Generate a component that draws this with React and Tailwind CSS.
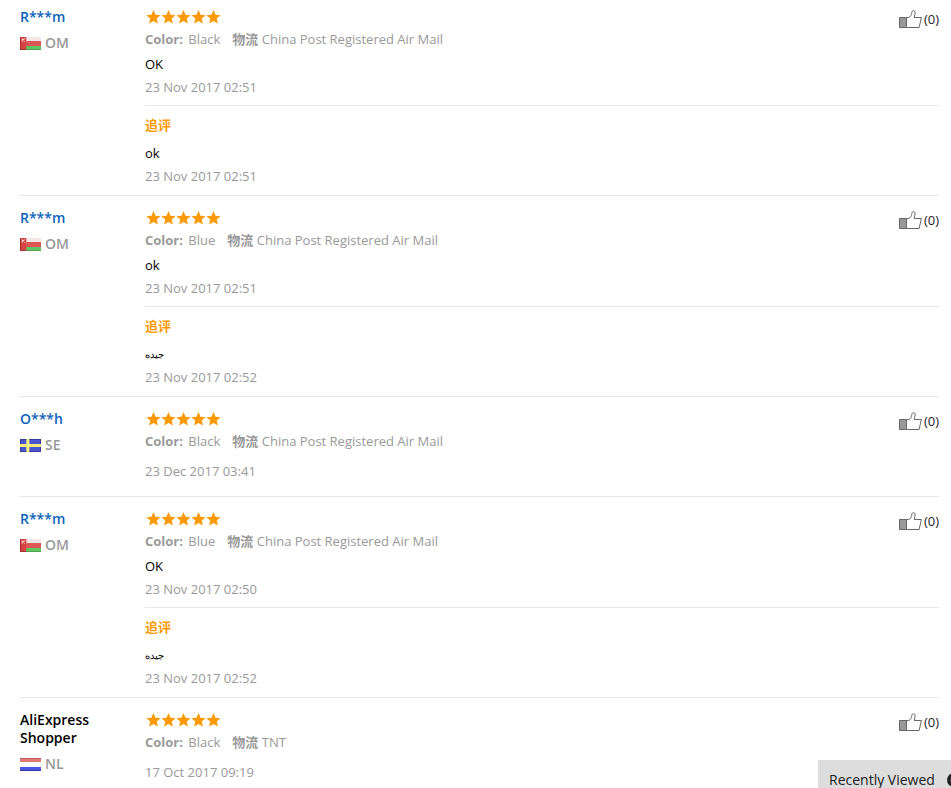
import React from "react";

const reviews = [
  { user: "R***m", country: "OM", color: "Black", shipping: "China Post Registered Air Mail", text: "OK", date: "23 Nov 2017 02:51", extra: { text: "ok", date: "23 Nov 2017 02:51" } },
  { user: "R***m", country: "OM", color: "Blue", shipping: "China Post Registered Air Mail", text: "ok", date: "23 Nov 2017 02:51", extra: { text: "جيده", arabic: true, date: "23 Nov 2017 02:52" } },
  { user: "O***h", country: "SE", color: "Black", shipping: "China Post Registered Air Mail", date: "23 Dec 2017 03:41" },
  { user: "R***m", country: "OM", color: "Blue", shipping: "China Post Registered Air Mail", text: "OK", date: "23 Nov 2017 02:50", extra: { text: "جيده", arabic: true, date: "23 Nov 2017 02:52" } },
  { user: "AliExpress Shopper", anonymous: true, country: "NL", color: "Black", shipping: "TNT", date: "17 Oct 2017 09:19" },
];

function Flag({ country }) {
  return (
    <svg width="21" height="13" viewBox="0 0 20 13" preserveAspectRatio="none" className="shrink-0" aria-hidden="true">
      {country === "OM" && (
        <g>
          <rect width="20" height="13" fill="#d64545" />
          <rect x="6" width="14" height="5" fill="#f3e6e6" />
          <rect x="6" y="4" width="14" height="5" fill="#dc5656" />
          <rect x="6" y="9" width="14" height="4" fill="#62c462" />
          <path d="M1.5 1.5l3 3m0-3l-3 3" stroke="#f8dede" strokeWidth="1" />
          <path d="M.5 0v13M0 12.5h6" stroke="#a92f2f" />
          <path d="M6 12.5h14" stroke="#4da64d" />
        </g>
      )}
      {country === "SE" && (
        <g>
          <rect width="20" height="13" fill="#4a55cf" />
          <path d="M0 6.5h20M7.5 0v13" stroke="#f1ec82" strokeWidth="3" />
          <path d="M0 .5h6M9 .5h11M0 12.5h6M9 12.5h11M.5 0v5M.5 8v5M19.5 0v5M19.5 8v5" stroke="#343b9c" />
        </g>
      )}
      {country === "NL" && (
        <g>
          <rect width="20" height="13" fill="#fbfbfb" />
          <rect width="20" height="4" fill="#e27878" />
          <rect y="9" width="20" height="4" fill="#4a55e0" />
          <path d="M0 .5h20" stroke="#bf5c5c" />
          <path d="M0 12.5h20" stroke="#3036a8" />
        </g>
      )}
    </svg>
  );
}

function Stars() {
  return (
    <div className="flex h-5 items-center" role="img" aria-label="5 stars">
      {[1, 2, 3, 4, 5].map((n) => (
        <svg key={n} width="15" height="14" viewBox="0 0 15 14" className="ml-px -mr-px" aria-hidden="true">
          <path d="M7.5 0l2 4.8 5.1.4-3.9 3.4 1.2 5-4.4-2.7-4.4 2.7 1.2-5L.4 5.2l5.1-.4z" fill="#ff9900" />
        </svg>
      ))}
    </div>
  );
}

function ThumbButton() {
  return (
    <button type="button" aria-label="Helpful (0)" className="flex h-5 items-center gap-0.5 text-[#222]">
      <svg width="23" height="19" viewBox="0 0 23 19" fill="none" aria-hidden="true">
        <path d="M.5 7.5h7v10h-7z" fill="#999" stroke="#666" />
        <path d="M7.5 7.5h2.2c1.9-.7 2.7-2.4 3-4.2.2-1.6.6-2.7 1.6-2.7 1.8 0 2.1 2 1.6 3.6L15.2 7.5h7.2l-2.3 10H7.5z" fill="#fff" stroke="#666" strokeLinejoin="round" />
      </svg>
      <span>(0)</span>
    </button>
  );
}

function Review({ review }) {
  const { user, anonymous, country, color, shipping, text, date, extra } = review;
  return (
    <article className="flex border-b border-[#e8e8e8] pt-3 first:pt-[7px] last:border-b-0">
      <div className="w-[125px] shrink-0 pt-px text-sm font-semibold">
        {anonymous ? (
          <div className="w-20 leading-[18px] text-black">{user}</div>
        ) : (
          <a href="#profile" className="block leading-[18px] text-[#0b63b8]">{user}</a>
        )}
        <div className="mt-[7px] flex h-5 items-center gap-1 text-[#999]">
          <Flag country={country} />
          <span>{country}</span>
        </div>
      </div>
      <div className="min-w-0 flex-1">
        <div className="flex items-start justify-between">
          <div>
            <Stars />
            <p className="mt-0.5 text-[#999]">
              <span className="mr-3"><b className="mr-0.5">Color:</b> {color}</span>
              <span><b>物流</b> {shipping}</span>
            </p>
          </div>
          <div className="pt-0.5">
            <ThumbButton />
          </div>
        </div>
        {text ? (
          <>
            <p className="mt-[5px] text-black">{text}</p>
            <time className="mt-[3px] block text-[#999]">{date}</time>
          </>
        ) : (
          <time className="mt-2.5 block pb-[15px] text-[#999]">{date}</time>
        )}
        {extra && (
          <div className="mt-2 border-t border-[#e8e8e8] pt-[9px] pb-[9px]">
            <h3 className="font-bold text-[#f90]">追评</h3>
            {extra.arabic ? (
              <p className="mt-2 h-5 text-[10px] text-black" lang="ar">{extra.text}</p>
            ) : (
              <p className="mt-2 text-black">{extra.text}</p>
            )}
            <time className="mt-[3px] block text-[#999]">{extra.date}</time>
          </div>
        )}
      </div>
    </article>
  );
}

export default function App() {
  return (
    <div className="h-screen overflow-hidden bg-white font-['Open_Sans','Noto_Sans_CJK_SC',sans-serif] text-[13px] leading-5">
      <main className="pr-3 pl-5">
        {reviews.map((review, i) => (
          <Review key={i} review={review} />
        ))}
      </main>
      <aside className="fixed right-0 bottom-0 w-[133px] overflow-hidden bg-[#ddd]">
        <button type="button" className="flex items-center gap-3 pt-3 pl-[11px] text-sm leading-4 whitespace-nowrap text-[#222]">
          Recently Viewed
          <svg width="14" height="14" viewBox="0 0 14 14" className="shrink-0" aria-hidden="true">
            <circle cx="7" cy="7" r="7" fill="#222" />
            <path d="M4 8l3-3 3 3" fill="none" stroke="#ddd" strokeWidth="2" />
          </svg>
        </button>
      </aside>
    </div>
  );
}
